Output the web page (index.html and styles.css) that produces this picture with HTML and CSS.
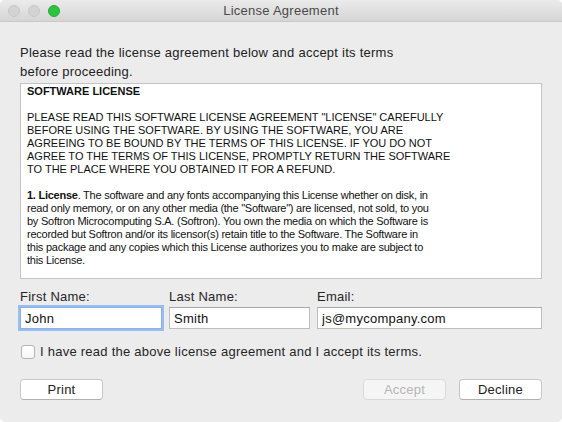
FILE: index.html
```html
<!DOCTYPE html>
<html lang="en">
<head>
    <meta charset="UTF-8">
    <title>License Agreement</title>
    <link rel="stylesheet" href="styles.css">
</head>
<body>
    <div class="window">
        <div class="titlebar">
            <div class="lights">
                <span class="light"></span>
                <span class="light"></span>
                <span class="light green"></span>
            </div>
            <div class="title">License Agreement</div>
        </div>

        <div class="content">
            <p class="intro">Please read the license agreement below and accept its terms<br>before proceeding.</p>

            <div class="license">
                <h2>SOFTWARE LICENSE</h2>
                <p>PLEASE READ THIS SOFTWARE LICENSE AGREEMENT "LICENSE" CAREFULLY<br>
                BEFORE USING THE SOFTWARE. BY USING THE SOFTWARE, YOU ARE<br>
                AGREEING TO BE BOUND BY THE TERMS OF THIS LICENSE. IF YOU DO NOT<br>
                AGREE TO THE TERMS OF THIS LICENSE, PROMPTLY RETURN THE SOFTWARE<br>
                TO THE PLACE WHERE YOU OBTAINED IT FOR A REFUND.</p>
                <p class="terms"><b>1. License</b>. The software and any fonts accompanying this License whether on disk, in<br>
                read only memory, or on any other media (the "Software") are licensed, not sold, to you<br>
                by Softron Microcomputing S.A. (Softron). You own the media on which the Software is<br>
                recorded but Softron and/or its licensor(s) retain title to the Software. The Software in<br>
                this package and any copies which this License authorizes you to make are subject to<br>
                this License.</p>
            </div>

            <div class="fields">
                <div class="field">
                    <label for="first">First Name:</label>
                    <input type="text" id="first" class="focused" value="John">
                </div>
                <div class="field">
                    <label for="last">Last Name:</label>
                    <input type="text" id="last" value="Smith">
                </div>
                <div class="field">
                    <label for="email">Email:</label>
                    <input type="text" id="email" value="js@mycompany.com">
                </div>
            </div>

            <label class="agree">
                <span class="box"></span>
                I have read the above license agreement and I accept its terms.
            </label>

            <div class="buttons">
                <button class="btn">Print</button>
                <div class="spacer"></div>
                <button class="btn" disabled>Accept</button>
                <button class="btn">Decline</button>
            </div>
        </div>
    </div>
</body>
</html>
```

FILE: styles.css
```css
body {
    margin: 0;
    background: #ffffff;
    font-family: 'Liberation Sans', Arial, sans-serif;
    font-size: 13px;
    letter-spacing: 0.25px;
    color: #222222;
}

.window {
    width: 562px;
    height: 422px;
    background: #ececec;
    border-radius: 5px;
    overflow: hidden;
}

.titlebar {
    height: 22px;
    border-bottom: 1px solid #c9c9c9;
    background: linear-gradient(#ebebeb, #d5d5d5);
    display: flex;
    align-items: center;
    position: relative;
    box-sizing: border-box;
}

.lights {
    display: flex;
    gap: 8px;
    padding-left: 8px;
    position: absolute;
    left: 0;
    top: 5px;
}

.light {
    width: 12px;
    height: 12px;
    border-radius: 50%;
    background: #d3d3d3;
    box-sizing: border-box;
    border: 1px solid #c6c6c6;
}

.light.green {
    background: #2bc33f;
    border-color: #24ad35;
}

.title {
    flex: 1;
    text-align: center;
    color: #4a4a4a;
    font-size: 13px;
}

.content {
    padding: 0 20px;
}

.intro {
    margin: 21px 0 2px;
    line-height: 19px;
}

.license {
    height: 196px;
    box-sizing: border-box;
    background: #ffffff;
    border: 1px solid #c4c4c4;
    padding: 1px 6px 0;
    font-size: 11px;
    line-height: 13px;
    letter-spacing: 0;
    color: #111111;
    overflow: hidden;
    white-space: nowrap;
}

.license h2 {
    font-size: 11px;
    margin: 0 0 13px;
}

.license p {
    margin: 0 0 13px;
}

.license .terms {
    letter-spacing: -0.25px;
}

.fields {
    display: grid;
    grid-template-columns: 142px 141px 1fr;
    gap: 7px;
    margin-top: 10px;
}

.field label {
    display: block;
    line-height: 16px;
    margin-bottom: 2px;
    color: #262626;
}

.field input {
    width: 100%;
    height: 22px;
    box-sizing: border-box;
    border: 1px solid #bdbdbd;
    border-top-color: #a9a9a9;
    padding: 0 4px;
    font-family: 'Liberation Sans', Arial, sans-serif;
    font-size: 13px;
    letter-spacing: 0.25px;
    color: #111111;
    background: #ffffff;
    outline: none;
}

.field input.focused {
    border-color: #8bb2e8;
    box-shadow: 0 0 0 2px #99bdf0;
}

.agree {
    display: flex;
    align-items: center;
    gap: 5px;
    margin-top: 14px;
    line-height: 18px;
    color: #262626;
}

.box {
    width: 14px;
    height: 14px;
    margin-left: 1px;
    box-sizing: border-box;
    border: 1px solid #b3b3b3;
    border-radius: 3px;
    background: linear-gradient(#ffffff, #f7f7f7);
}

.buttons {
    display: flex;
    gap: 13px;
    margin-top: 18px;
}

.spacer {
    flex: 1;
}

.btn {
    width: 83px;
    height: 21px;
    border: 1px solid #c8c8c8;
    border-bottom-color: #b0b0b0;
    border-radius: 4px;
    background: #ffffff;
    font-family: 'Liberation Sans', Arial, sans-serif;
    font-size: 13px;
    letter-spacing: 0.25px;
    color: #222222;
    padding: 0;
}

.btn:disabled {
    background: #f5f5f5;
    border-color: #d9d9d9;
    color: #b5b5b5;
}
```
